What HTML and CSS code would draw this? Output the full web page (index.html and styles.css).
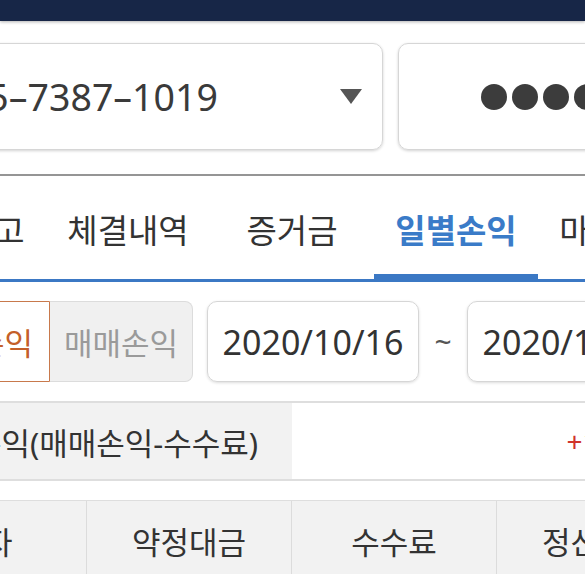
FILE: index.html
```html
<!DOCTYPE html>
<html lang="ko">
<head>
<meta charset="utf-8">
<title>일별손익</title>
<link rel="stylesheet" href="styles.css">
</head>
<body>
<div class="topbar"></div>
<div class="page">
  <div class="account-row">
    <div class="select-box">
      <span class="acct">0015–7387–1019</span>
      <span class="caret"></span>
    </div>
    <div class="pw-box">
      <span class="dot"></span><span class="dot"></span><span class="dot"></span><span class="dot"></span>
    </div>
  </div>
  <div class="divider"></div>
  <nav class="tabs">
    <span class="tab">보유잔고</span>
    <span class="tab">체결내역</span>
    <span class="tab">증거금</span>
    <span class="tab active">일별손익</span>
    <span class="tab">마감손익</span>
  </nav>
  <div class="filter-row">
    <div class="seg">
      <span class="seg-btn on">실현손익</span>
      <span class="seg-btn off">매매손익</span>
    </div>
    <div class="date">2020/10/16</div>
    <span class="tilde">~</span>
    <div class="date">2020/10/16</div>
  </div>
  <div class="summary">
    <div class="sum-label">실현손익(매매손익-수수료)</div>
    <div class="sum-value">+123,500</div>
  </div>
  <div class="grid-head">
    <div class="col">일자</div>
    <div class="col">약정대금</div>
    <div class="col">수수료</div>
    <div class="col">정산금액</div>
  </div>
</div>
</body>
</html>
```
FILE: styles.css
```css
* { box-sizing: border-box; margin: 0; padding: 0; }
html, body { overflow: hidden; }
body {
  width: 585px;
  height: 574px;
  background: #fff;
  font-family: "Noto Sans", "Noto Sans CJK KR", sans-serif;
  color: #333;
}
.topbar {
  height: 21px;
  background: #172647;
  box-shadow: 0 1px 3px rgba(0, 0, 0, 0.3);
}
.page {
  width: 820px;
  margin-left: -118px;
  white-space: nowrap;
}
.account-row {
  display: flex;
  gap: 15px;
  padding: 22px 20px 0;
}
.select-box {
  width: 481px;
  height: 107px;
  border: 1px solid #d6d6d6;
  border-radius: 10px;
  box-shadow: 0 1px 3px rgba(0, 0, 0, 0.18);
  display: flex;
  align-items: center;
  padding: 0 20px 0 20px;
  font-size: 37.5px;
  color: #3a3a3a;
}
.acct { flex: 1; }
.caret {
  width: 0;
  height: 0;
  border-left: 11px solid transparent;
  border-right: 11px solid transparent;
  border-top: 15px solid #555;
}
.pw-box {
  flex: 1;
  height: 107px;
  border: 1px solid #d6d6d6;
  border-radius: 10px;
  box-shadow: 0 1px 3px rgba(0, 0, 0, 0.18);
  display: flex;
  align-items: center;
  justify-content: center;
  gap: 5px;
}
.dot {
  width: 26px;
  height: 26px;
  border-radius: 50%;
  background: #3c3c3c;
}
.divider {
  height: 2px;
  background: #959595;
  margin-top: 24px;
}
.tabs {
  display: flex;
  height: 106px;
  border-bottom: 3px solid #3b78c4;
}
.tab {
  flex: 0 0 164px;
  display: flex;
  align-items: center;
  justify-content: center;
  font-size: 33px;
  color: #333;
  padding-top: 3px;
}
.tab.active {
  color: #3a7bc8;
  font-weight: 700;
  box-shadow: inset 0 -5px 0 #3b78c4;
}
.filter-row {
  display: flex;
  align-items: center;
  height: 81px;
  margin-top: 19px;
  padding: 0 20px;
}
.seg { display: flex; height: 81px; }
.seg-btn {
  display: flex;
  align-items: center;
  justify-content: center;
  font-size: 31px;
}
.seg-btn.on {
  width: 148px;
  color: #c45f2a;
  background: #fff;
  border: 1px solid #c8794c;
  border-radius: 8px 0 0 8px;
}
.seg-btn.off {
  width: 143px;
  color: #9a9a9a;
  background: #f0f0f0;
  border: 1px solid #dcdcdc;
  border-left: none;
  border-radius: 0 8px 8px 0;
}
.date {
  width: 212px;
  height: 81px;
  margin-left: 14px;
  border: 1px solid #d6d6d6;
  border-radius: 10px;
  box-shadow: 0 1px 3px rgba(0, 0, 0, 0.14);
  display: flex;
  align-items: center;
  justify-content: center;
  font-size: 34px;
  color: #333;
}
.tilde {
  width: 48px;
  text-align: center;
  font-size: 30px;
  color: #555;
}
.tilde + .date { margin-left: 0; }
.summary {
  display: grid;
  grid-template-columns: 410px 1fr;
  height: 80px;
  margin-top: 19px;
  border-top: 2px solid #dedede;
  border-bottom: 2px solid #dedede;
}
.sum-label {
  background: #f2f2f2;
  display: flex;
  align-items: center;
  justify-content: center;
  font-size: 31px;
  color: #333;
}
.sum-value {
  display: flex;
  align-items: center;
  justify-content: flex-end;
  padding-right: 16px;
  font-size: 28px;
  color: #d0342c;
}
.grid-head {
  display: grid;
  grid-template-columns: repeat(4, 205px);
  height: 80px;
  margin-top: 19px;
  border-top: 1px solid #dedede;
  background: #f2f2f2;
}
.col {
  display: flex;
  align-items: center;
  justify-content: center;
  font-size: 31px;
  color: #333;
  border-right: 1px solid #dcdcdc;
}
```
